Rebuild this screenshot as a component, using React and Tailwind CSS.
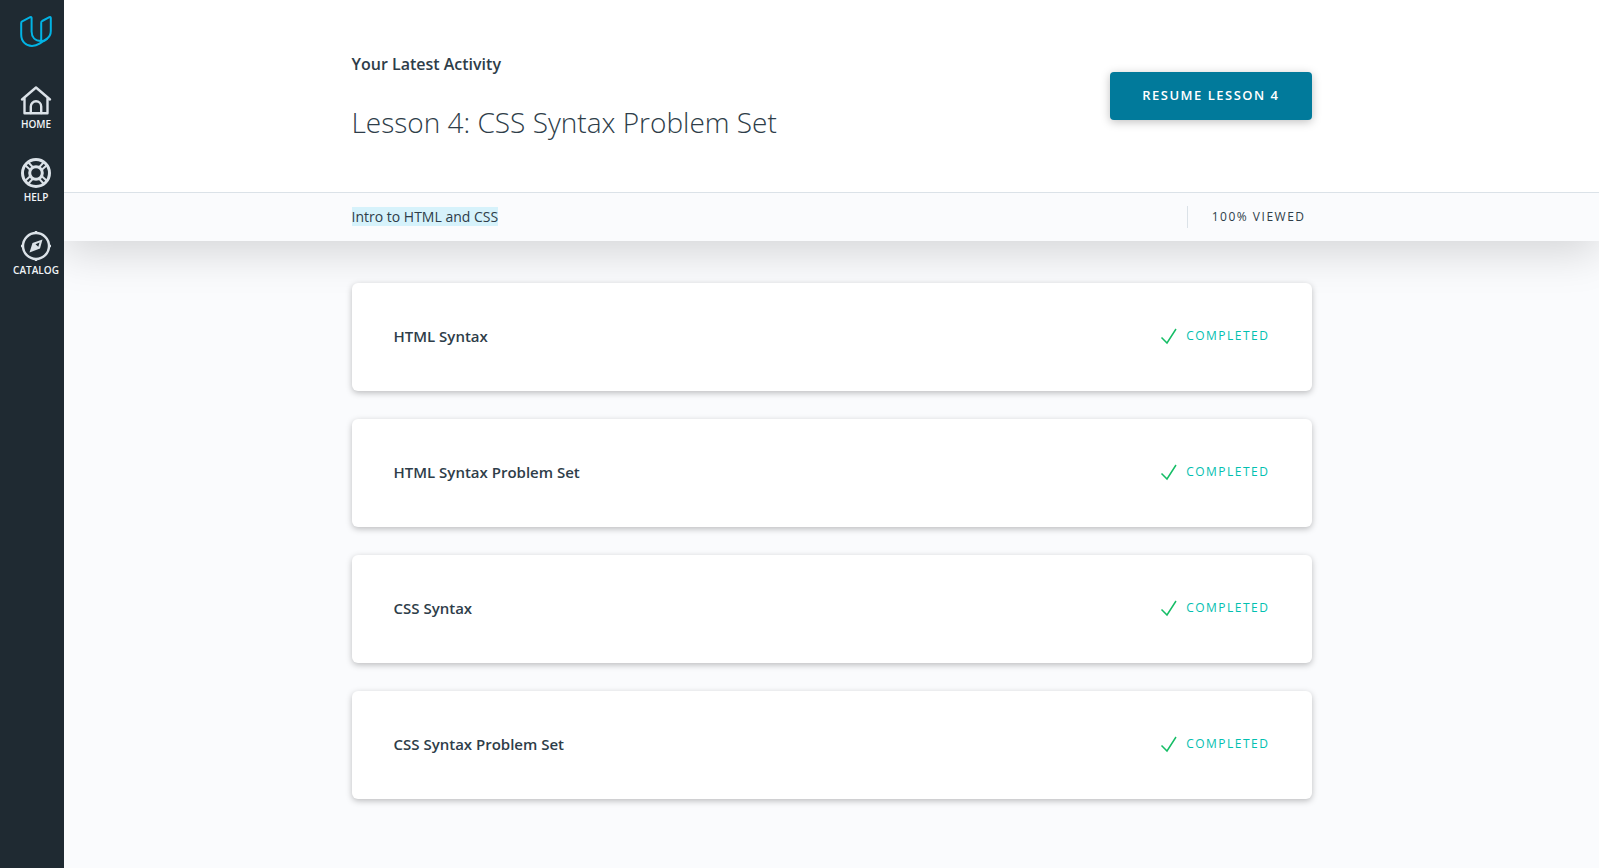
const lessons = [
  'HTML Syntax',
  'HTML Syntax Problem Set',
  'CSS Syntax',
  'CSS Syntax Problem Set',
];

function Logo() {
  return (
    <svg viewBox="0 0 32 32" className="h-8 w-8" fill="none" stroke="#02b3e4" strokeWidth="2" strokeLinejoin="round" strokeLinecap="round" aria-hidden="true">
      <path d="M10.200 2.200 2.200 6.300Q1.200 6.900 1.200 8V19.500C1.200 26.500 6 31 12 31C14.800 31 17.300 30.200 19.500 28.700L26.800 23.800C29.500 21.900 30.800 19.500 30.800 16V3Q30.800 1.500 29.400 2.200L22.200 6Q21.200 6.600 21.200 7.700V26C15 26 11.600 22 11.600 16.500V3Q11.600 1.500 10.200 2.200Z" />
      <path d="M21.200 26C24 26 26 25 27 23.800" />
    </svg>
  );
}

function HomeIcon() {
  return (
    <svg viewBox="0 0 32 32" className="h-8 w-8" fill="none" stroke="#dbe2e8" strokeWidth="2.4" strokeLinejoin="round" strokeLinecap="round" aria-hidden="true">
      <path d="M2 15.500 16 3.500 30 15.500M4.500 14V29.200H27.500V14" />
      <path d="M10.800 29V22.500a5.200 5.200 0 0 1 10.400 0V29" />
    </svg>
  );
}

function HelpIcon() {
  return (
    <svg viewBox="0 0 32 32" className="h-8 w-8" fill="none" stroke="#dbe2e8" aria-hidden="true">
      <circle cx="16" cy="16" r="13.500" strokeWidth="3" />
      <circle cx="16" cy="16" r="6.300" strokeWidth="3" />
      <path strokeWidth="2" d="M5.500 8.500 10.700 13.200M8.500 5.500 13.200 10.700M26.500 8.500 21.300 13.200M23.500 5.500 18.800 10.700M5.500 23.500 10.700 18.800M8.500 26.500 13.200 21.300M26.500 23.500 21.300 18.800M23.500 26.500 18.800 21.300" />
    </svg>
  );
}

function CatalogIcon() {
  return (
    <svg viewBox="0 0 32 32" className="h-8 w-8" fill="none" stroke="#dbe2e8" aria-hidden="true">
      <circle cx="16" cy="16" r="13" strokeWidth="2.400" />
      <path strokeWidth="2.400" d="M16 1V4M16 28V31M1 16H4M28 16H31" />
      <path fill="#dbe2e8" fillRule="evenodd" stroke="none" d="M22.500 9.500 20 18.500 9.500 22.500 12.500 13ZM15.500 14.200 18.300 16.800 19.500 12.600Z" />
    </svg>
  );
}

function NavLink({ icon, label }) {
  return (
    <a href="#" className="flex flex-col items-center text-[10px] leading-4 font-semibold text-[#f0f4f7]">
      {icon}
      {label}
    </a>
  );
}

function LessonCard({ title }) {
  return (
    <li>
      <a href="#" className="flex h-[108px] items-center justify-between rounded-md bg-white px-[42px] pb-0.5 shadow-[0_2px_6px_rgba(0,0,0,0.25)]">
        <h3 className="text-[15px] leading-6 font-semibold">{title}</h3>
        <span className="flex items-center gap-2 text-xs leading-6 tracking-[1.5px] text-[#02c0b0]">
          <svg viewBox="0 0 18 18" className="h-[18px] w-[18px]" fill="none" stroke="#15bd66" strokeWidth="1.500" aria-hidden="true">
            <path d="M1.500 10.500 7 16 16 2" />
          </svg>
          COMPLETED
        </span>
      </a>
    </li>
  );
}

export default function App() {
  return (
    <div className="flex min-h-screen bg-[#fafbfd] font-['Open_Sans',sans-serif] text-[#2e3d49]">
      <nav className="relative flex w-16 shrink-0 flex-col items-center bg-[#1f2a32] pt-[15px] pl-2" aria-label="Main">
        <a href="#" aria-label="Dashboard"><Logo /></a>
        <div className="mt-[37px] flex flex-col gap-[25px]">
          <NavLink icon={<HomeIcon />} label="HOME" />
          <NavLink icon={<HelpIcon />} label="HELP" />
          <NavLink icon={<CatalogIcon />} label="CATALOG" />
        </div>
      </nav>
      <div className="min-w-0 grow">
        <header className="shadow-[0_12px_40px_0_rgba(0,0,0,0.15)]">
          <div className="border-b border-[#dbe2e8] bg-white">
            <div className="mx-auto flex h-48 max-w-[960px] items-center justify-between">
              <div className="pt-0.5">
                <p className="text-base leading-6 font-semibold">Your Latest Activity</p>
                <h1 className="mt-[26px] text-[28px] leading-10 font-light">Lesson 4: CSS Syntax Problem Set</h1>
              </div>
              <button type="button" className="h-12 rounded bg-[#017a9b] px-8 text-[13px] font-semibold tracking-[1.5px] text-white shadow-[0_2px_10px_rgba(0,0,0,0.25)]">
                RESUME LESSON 4
              </button>
            </div>
          </div>
          <div className="bg-[#fafbfd]">
            <div className="mx-auto flex h-12 max-w-[960px] items-center justify-between">
              <h2 className="text-sm"><span className="bg-[#d6f2fb]">Intro to HTML and CSS</span></h2>
              <span className="border-l border-[#dbe2e8] pr-1.5 pl-6 text-xs leading-[22px] tracking-[1.5px]">100% VIEWED</span>
            </div>
          </div>
        </header>
        <main className="py-[42px]">
          <ul className="mx-auto flex max-w-[960px] flex-col gap-7">
            {lessons.map((title) => <LessonCard key={title} title={title} />)}
          </ul>
        </main>
      </div>
    </div>
  );
}
